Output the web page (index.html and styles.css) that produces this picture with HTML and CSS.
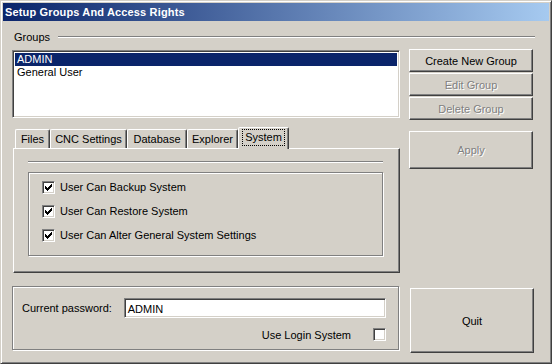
FILE: index.html
```html
<!DOCTYPE html>
<html lang="en">
<head>
    <meta charset="UTF-8">
    <title>Setup Groups And Access Rights</title>
    <link rel="stylesheet" href="styles.css">
</head>
<body>

<div class="window">
    <div class="titlebar">Setup Groups And Access Rights</div>

    <div class="content">
        <div class="legend-row">
            <span>Groups</span>
            <div class="etch"></div>
        </div>

        <div class="columns">
            <!-- coluna da esquerda -->
            <div class="left">
                <div class="listbox">
                    <div class="item selected">ADMIN</div>
                    <div class="item">General User</div>
                </div>

                <div class="tabs">
                    <div class="tab tab-files">Files</div>
                    <div class="tab tab-cnc">CNC Settings</div>
                    <div class="tab tab-db">Database</div>
                    <div class="tab tab-explorer">Explorer</div>
                    <div class="tab tab-system active"><span class="focus">System</span></div>
                </div>

                <div class="panel">
                    <div class="etch"></div>
                    <div class="groupbox options">
                        <label class="check-row"><span class="checkbox checked"><svg width="7" height="7" viewBox="0 0 7 7"><path d="M0 2h1v3H0zM1 3h1v3H1zM2 4h1v3H2zM3 3h1v3H3zM4 2h1v3H4zM5 1h1v3H5zM6 0h1v3H6z" fill="#000"/></svg></span>User Can Backup System</label>
                        <label class="check-row"><span class="checkbox checked"><svg width="7" height="7" viewBox="0 0 7 7"><path d="M0 2h1v3H0zM1 3h1v3H1zM2 4h1v3H2zM3 3h1v3H3zM4 2h1v3H4zM5 1h1v3H5zM6 0h1v3H6z" fill="#000"/></svg></span>User Can Restore System</label>
                        <label class="check-row"><span class="checkbox checked"><svg width="7" height="7" viewBox="0 0 7 7"><path d="M0 2h1v3H0zM1 3h1v3H1zM2 4h1v3H2zM3 3h1v3H3zM4 2h1v3H4zM5 1h1v3H5zM6 0h1v3H6z" fill="#000"/></svg></span>User Can Alter General System Settings</label>
                    </div>
                </div>

                <div class="groupbox login">
                    <div class="password-row">
                        <span class="label">Current password:</span>
                        <div class="textbox">ADMIN</div>
                    </div>
                    <label class="login-row">Use Login System <span class="checkbox"></span></label>
                </div>
            </div>

            <!-- coluna da direita -->
            <div class="right">
                <button class="btn">Create New Group</button>
                <button class="btn disabled">Edit Group</button>
                <button class="btn disabled">Delete Group</button>
                <button class="btn disabled apply">Apply</button>
                <button class="btn quit">Quit</button>
            </div>
        </div>
    </div>
</div>

</body>
</html>
```

FILE: styles.css
```css
/* Janela estilo Windows 2000 */
* { box-sizing: border-box; }
body { margin: 0; background: #d4d0c8; font-family: "Liberation Sans", Arial, sans-serif; font-size: 11px; color: #000; }

.window { width: 552px; height: 364px; padding: 2px; background: #d4d0c8; border: 1px solid; border-color: #d4d0c8 #404040 #404040 #d4d0c8; box-shadow: inset 1px 1px #fff, inset -1px -1px #808080; }
.titlebar { height: 18px; line-height: 18px; padding-left: 2px; color: #fff; font-weight: bold; letter-spacing: 0.15px; background: linear-gradient(to right, #0a246a, #a6caf0); }

.content { padding: 9px 0 0 9px; }
.legend-row { display: flex; align-items: center; width: 523px; height: 14px; }
.legend-row span { padding-left: 2px; }
.legend-row .etch { flex: 1; margin-left: 8px; }
.etch { height: 2px; border-top: 1px solid #808080; border-bottom: 1px solid #fff; }

.columns { display: flex; gap: 9px; margin-top: 5px; }
.left { width: 388px; display: flex; flex-direction: column; }
.right { width: 124px; display: flex; flex-direction: column; }

/* lista de grupos */
.listbox { margin-top: 1px; height: 68px; padding: 2px; background: #fff; border: 1px solid; border-color: #808080 #fff #fff #808080; box-shadow: inset 1px 1px #404040, inset -1px -1px #d4d0c8; }
.item { height: 13px; line-height: 13px; padding-left: 2px; }
.item.selected { background: #0a246a; color: #fff; }

/* abas */
.tabs { display: flex; align-items: flex-end; height: 21px; margin-top: 9px; padding-left: 3px; }
.tab { height: 19px; line-height: 19px; text-align: center; white-space: nowrap; border: 1px solid; border-bottom: none; border-color: #fff #404040 transparent #fff; box-shadow: inset -1px 0 #808080; border-radius: 2px 2px 0 0; }
.tab-files { width: 35px; }
.tab-cnc { width: 77px; }
.tab-db { width: 60px; }
.tab-explorer { width: 51px; }
.tab-system { width: 51px; }
.tab.active { height: 22px; line-height: 19px; margin-bottom: -1px; position: relative; z-index: 1; background: #d4d0c8; }
.focus { display: inline-block; padding: 0 2px; line-height: 15px; outline: 1px dotted #000; margin-top: 2px; vertical-align: top; }

.panel { margin-left: 1px; height: 125px; padding: 12px 15px 0 14px; border: 1px solid; border-color: #fff #404040 #404040 #fff; box-shadow: inset -1px -1px #808080; }
.panel .etch { width: 355px; }

.groupbox { border: 1px solid #808080; box-shadow: inset 1px 1px #fff, 1px 1px #fff; }
.options { width: 355px; height: 84px; margin-top: 9px; padding: 2px 0 0 13px; }
.check-row { display: flex; align-items: center; gap: 5px; height: 24px; }

.checkbox { display: inline-block; width: 13px; height: 13px; padding: 2px; background: #fff; border: 1px solid; border-color: #808080 #fff #fff #808080; box-shadow: inset 1px 1px #404040, inset -1px -1px #d4d0c8; }
.checkbox svg { display: block; }

/* senha */
.login { width: 387px; height: 64px; margin-top: 13px; padding: 11px 12px 0 9px; }
.password-row { display: flex; align-items: center; height: 20px; }
.password-row .label { width: 102px; }
.textbox { width: 263px; height: 20px; line-height: 16px; padding: 2px 3px; background: #fff; border: 1px solid; border-color: #808080 #fff #fff #808080; box-shadow: inset 1px 1px #404040, inset -1px -1px #d4d0c8; }
.login-row { display: flex; align-items: center; justify-content: flex-end; gap: 22px; height: 13px; margin-top: 10px; }

/* botões */
.btn { width: 124px; height: 23px; margin: 0 0 1px; padding: 0; font: inherit; color: #000; background: #d4d0c8; border: 1px solid; border-color: #fff #404040 #404040 #fff; box-shadow: inset -1px -1px #808080; }
.btn.disabled { color: #808080; text-shadow: 1px 1px #fff; }
.btn.apply { height: 38px; margin-top: 10px; }
.btn.quit { height: 65px; margin-top: 118px; margin-left: 1px; }
```
